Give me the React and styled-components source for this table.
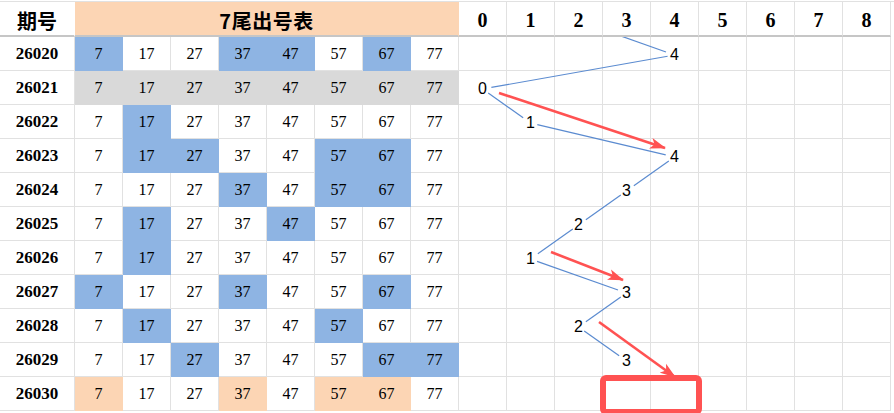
import React from 'react'
import styled, { createGlobalStyle, css } from 'styled-components'

const GRID = '#e1e1e1'
const FILLS = {
  blue: '#8eb4e3',
  gray: '#d9d9d9',
  peach: '#fcd5b4',
}

const NUMBERS = [7, 17, 27, 37, 47, 57, 67, 77]
const DIGITS = [0, 1, 2, 3, 4, 5, 6, 7, 8]

const rows = [
  { id: '26020', marks: [0, 3, 4, 6], value: 4 },
  { id: '26021', marks: [0, 1, 2, 3, 4, 5, 6, 7], tone: 'gray', value: 0 },
  { id: '26022', marks: [1], value: 1 },
  { id: '26023', marks: [1, 2, 5, 6], value: 4 },
  { id: '26024', marks: [3, 5, 6], value: 3 },
  { id: '26025', marks: [1, 4], value: 2 },
  { id: '26026', marks: [1], value: 1 },
  { id: '26027', marks: [0, 3, 6], value: 3 },
  { id: '26028', marks: [1, 5], value: 2 },
  { id: '26029', marks: [2, 6, 7], value: 3 },
  { id: '26030', marks: [0, 3, 5, 6], tone: 'peach' },
]

// previous draw (above the visible sheet) sat on 2
const PREV = 2

const GlobalStyle = createGlobalStyle`
  html, body {
    margin: 0;
    background: #fff;
  }
  body {
    font-family: "Liberation Sans", Arial, sans-serif;
    overflow: hidden;
  }
`

const Sheet = styled.div`
  position: relative;
  width: 894px;
  height: 413px;
  padding-top: 1px;
  box-sizing: border-box;
`

const Grid = styled.div`
  display: grid;
  grid-template-columns: 75px repeat(17, 48px);
  border-top: 1px solid ${GRID};
`

const Head = styled.div`
  box-sizing: border-box;
  height: 35px;
  display: flex;
  align-items: center;
  justify-content: center;
  border-bottom: 2px solid #c6c6c6;
  border-right: 1px solid ${GRID};
  color: #000;
  font-weight: 700;
`

const LabelHead = styled(Head)`
  font-family: "Noto Sans CJK SC", sans-serif;
  font-size: 20px;
  padding-top: 3px;
  border-right-color: #fff;
`

const TitleHead = styled(Head)`
  grid-column: span 8;
  background: ${FILLS.peach};
  border-right-color: ${FILLS.peach};
  font-family: "Noto Sans CJK SC", sans-serif;
  font-size: 20px;
  padding-top: 3px;
  letter-spacing: 0.5px;
`

const DigitHead = styled(Head)`
  font-family: "Liberation Serif", serif;
  font-size: 20px;
  padding-top: 4px;
`

const Cell = styled.div`
  height: 34px;
  box-sizing: border-box;
  display: flex;
  align-items: center;
  justify-content: center;
  border-right: 1px solid ${GRID};
  border-bottom: 1px solid ${GRID};
  color: #000;
  ${({ $fill }) =>
    $fill &&
    css`
      background: ${FILLS[$fill]};
      border-color: ${FILLS[$fill]};
    `}
`

const IdCell = styled(Cell)`
  font-family: "Liberation Serif", serif;
  font-weight: 700;
  font-size: 17px;
  padding-top: 1px;
`

const NumCell = styled(Cell)`
  font-family: "Liberation Serif", serif;
  font-size: 16px;
  padding-top: 1px;
`

const ChartCell = styled(Cell)`
  font-family: "Liberation Sans", Arial, sans-serif;
  font-size: 16px;
  padding-top: 3px;
`

const Overlay = styled.svg`
  position: absolute;
  left: 0;
  top: 0;
  pointer-events: none;
`

const RED = '#ff5252'
const BLUE = '#5b8bd0'

const px = (v) => 459 + 48 * v + 23.5
const py = (i) => 37 + 34 * i + 18

function trim(a, b, s1, s2) {
  const dx = b[0] - a[0]
  const dy = b[1] - a[1]
  const len = Math.hypot(dx, dy)
  const ux = dx / len
  const uy = dy / len
  return [a[0] + ux * s1, a[1] + uy * s1, b[0] - ux * s2, b[1] - uy * s2]
}

function Trend() {
  const pts = [[px(PREV), py(-1)]]
  rows.forEach((r, i) => {
    if (r.value !== undefined) pts.push([px(r.value), py(i)])
  })
  const segs = []
  for (let k = 1; k < pts.length; k++) {
    segs.push(trim(pts[k - 1], pts[k], 7, 9))
  }

  const arrows = [
    [499, 93, 665, 148],
    [551, 252, 623, 280],
    [599, 322, 675, 377],
  ]

  return (
    <Overlay width="894" height="413" viewBox="0 0 894 413">
      <defs>
        <clipPath id="body">
          <rect x="0" y="37" width="894" height="380" />
        </clipPath>
        <marker
          id="head"
          markerUnits="userSpaceOnUse"
          markerWidth="16"
          markerHeight="12"
          refX="15"
          refY="6"
          orient="auto"
        >
          <path d="M0 0.5 L16 6 L0 11.5 L4 6 Z" fill={RED} />
        </marker>
      </defs>
      <g clipPath="url(#body)" stroke={BLUE} strokeWidth="1.2" fill="none">
        {segs.map((s, i) => (
          <line key={i} x1={s[0]} y1={s[1]} x2={s[2]} y2={s[3]} />
        ))}
      </g>
      <g stroke={RED} strokeWidth="2.6" fill="none">
        {arrows.map((a, i) => (
          <line key={i} x1={a[0]} y1={a[1]} x2={a[2]} y2={a[3]} markerEnd="url(#head)" />
        ))}
        <rect x="603" y="378" width="96" height="34" rx="3" strokeWidth="6" />
      </g>
    </Overlay>
  )
}

export default function App() {
  return (
    <>
      <GlobalStyle />
      <Sheet>
        <Grid>
          <LabelHead>期号</LabelHead>
          <TitleHead>7尾出号表</TitleHead>
          {DIGITS.map((d) => (
            <DigitHead key={d}>{d}</DigitHead>
          ))}

          {rows.map((r) => (
            <React.Fragment key={r.id}>
              <IdCell>{r.id}</IdCell>
              {NUMBERS.map((n, j) => (
                <NumCell key={n} $fill={r.marks.includes(j) ? r.tone || 'blue' : undefined}>
                  {n}
                </NumCell>
              ))}
              {DIGITS.map((d) => (
                <ChartCell key={d}>{r.value === d ? d : ''}</ChartCell>
              ))}
            </React.Fragment>
          ))}
        </Grid>
        <Trend />
      </Sheet>
    </>
  )
}
